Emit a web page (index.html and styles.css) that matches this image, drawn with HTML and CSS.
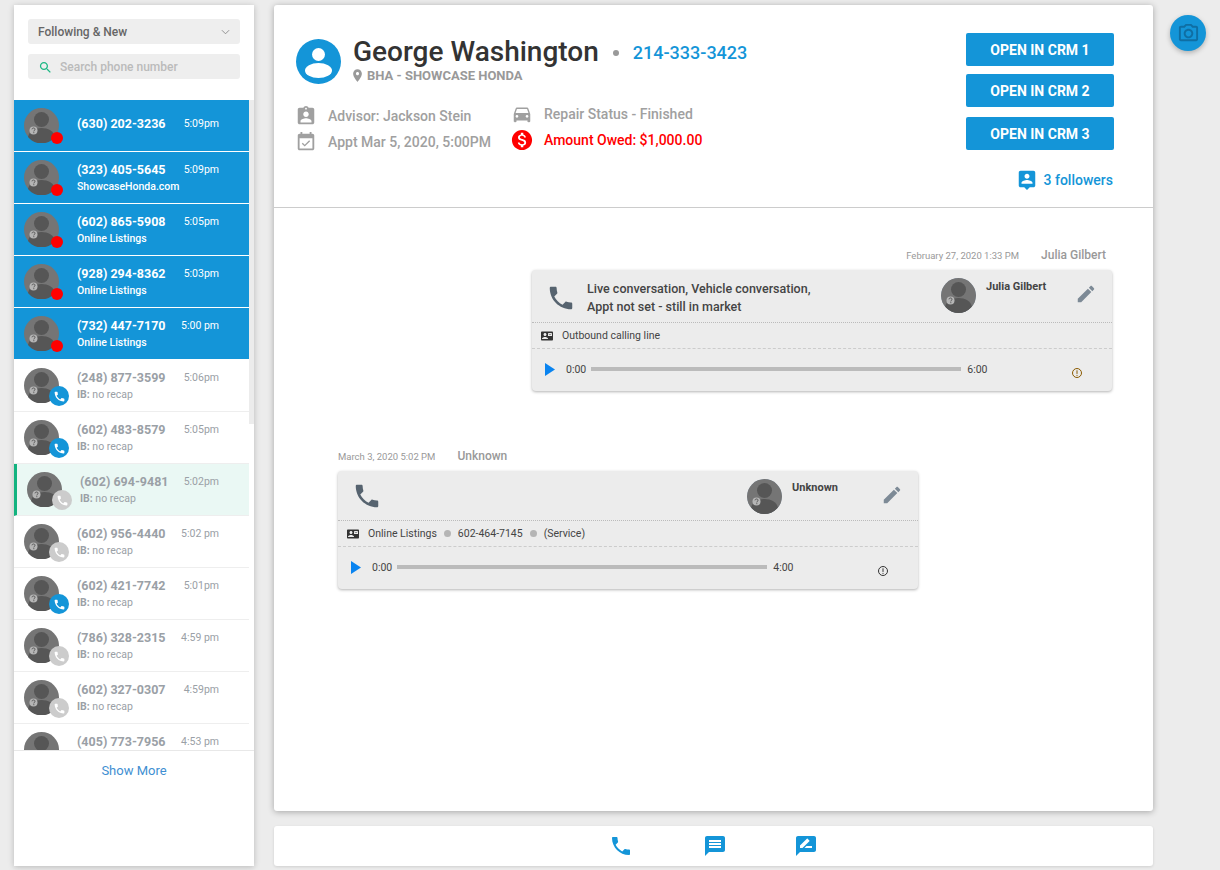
FILE: index.html
```html
<!DOCTYPE html>
<html>
<head>
<title>Calls</title>
<link rel="stylesheet" href="styles.css">
</head>
<body>
<svg class="defs" width="0" height="0">
  <symbol id="ava" viewBox="0 0 35 35">
    <circle class="ava-bg" cx="17.5" cy="17.5" r="17.5"/>
    <circle class="ava-fg" cx="17.5" cy="11.5" r="7.5"/>
    <path class="ava-fg" d="M4 29c1-6 7-9 13.500-9s12.500 3 13.500 9a17.500 17.500 0 0 1-27 0z"/>
    <circle class="ava-q" cx="9.500" cy="22.500" r="4"/>
    <path class="ava-qm" d="M8 21.300c.2-1 .8-1.300 1.500-1.300.9 0 1.500.5 1.500 1.300 0 1.100-1.200 1-1.200 2.100M9.800 24.200v1"/>
  </symbol>
  <symbol id="i-phone" viewBox="0 0 24 24"><path d="M6.620 10.790c1.440 2.830 3.760 5.140 6.590 6.590l2.200-2.200c.27-.27.67-.36 1.020-.24 1.120.37 2.330.57 3.570.57.55 0 1 .45 1 1V20c0 .55-.45 1-1 1-9.390 0-17-7.610-17-17 0-.55.45-1 1-1h3.500c.55 0 1 .45 1 1 0 1.250.2 2.450.57 3.570.11.35.03.74-.25 1.020l-2.200 2.200z"/></symbol>
  <symbol id="i-edit" viewBox="0 0 24 24"><path d="M3 17.250V21h3.750L17.810 9.940l-3.750-3.750L3 17.250zM20.710 7.040c.39-.39.39-1.020 0-1.410l-2.340-2.340c-.39-.39-1.020-.39-1.410 0l-1.830 1.830 3.750 3.750 1.830-1.830z"/></symbol>
  <symbol id="i-line" viewBox="0 0 24 24"><path d="M21 8V7l-3 2-3-2v1l3 2 3-2zm1-5H2C.9 3 0 3.900 0 5v14c0 1.100.9 2 2 2h20c1.100 0 1.990-.9 1.990-2L24 5c0-1.100-.9-2-2-2zM8 6c1.660 0 3 1.340 3 3s-1.340 3-3 3-3-1.340-3-3 1.340-3 3-3zm6 12H2v-1c0-2 4-3.100 6-3.100s6 1.100 6 3.100v1zm8-6h-8V6h8v6z"/></symbol>
  <symbol id="i-info" viewBox="0 0 12 12"><circle cx="6" cy="6" r="4.500" fill="none" stroke="currentColor"/><path d="M6 3.300v3.600M6 7.900v1" stroke="currentColor" fill="none"/></symbol>
</svg>

<div class="app">
  <aside class="sidebar">
    <div class="filters">
      <div class="filter-select">
        <span>Following &amp; New</span>
        <svg class="chevron" viewBox="0 0 10 6"><polyline points="1,1 5,5 9,1"/></svg>
      </div>
      <div class="filter-search">
        <svg class="search-ico" viewBox="0 0 24 24"><path d="M15.500 14h-.79l-.28-.27C15.410 12.590 16 11.110 16 9.500 16 5.910 13.090 3 9.500 3S3 5.910 3 9.500 5.910 16 9.500 16c1.610 0 3.090-.59 4.230-1.570l.27.28v.79l5 4.990L20.490 19l-4.990-5zm-6 0C7.010 14 5 11.990 5 9.500S7.010 5 9.500 5 14 7.010 14 9.500 11.990 14 9.500 14z"/></svg>
        <span>Search phone number</span>
      </div>
    </div>

    <div class="list-wrap">
      <ul class="list">
        <li class="item hot single">
          <div class="pic"><svg class="ava"><use href="#ava"/></svg><i class="dot-red"></i></div>
          <div class="txt"><div class="row"><b>(630) 202-3236</b><time>5:09pm</time></div></div>
        </li>
        <li class="item hot">
          <div class="pic"><svg class="ava"><use href="#ava"/></svg><i class="dot-red"></i></div>
          <div class="txt"><div class="row"><b>(323) 405-5645</b><time>5:09pm</time></div><p>ShowcaseHonda.com</p></div>
        </li>
        <li class="item hot">
          <div class="pic"><svg class="ava"><use href="#ava"/></svg><i class="dot-red"></i></div>
          <div class="txt"><div class="row"><b>(602) 865-5908</b><time>5:05pm</time></div><p>Online Listings</p></div>
        </li>
        <li class="item hot">
          <div class="pic"><svg class="ava"><use href="#ava"/></svg><i class="dot-red"></i></div>
          <div class="txt"><div class="row"><b>(928) 294-8362</b><time>5:03pm</time></div><p>Online Listings</p></div>
        </li>
        <li class="item hot">
          <div class="pic"><svg class="ava"><use href="#ava"/></svg><i class="dot-red"></i></div>
          <div class="txt"><div class="row"><b>(732) 447-7170</b><time>5:00 pm</time></div><p>Online Listings</p></div>
        </li>
        <li class="item">
          <div class="pic"><svg class="ava"><use href="#ava"/></svg><i class="badge on"><svg><use href="#i-phone"/></svg></i></div>
          <div class="txt"><div class="row"><b>(248) 877-3599</b><time>5:06pm</time></div><p><strong>IB:</strong> no recap</p></div>
        </li>
        <li class="item">
          <div class="pic"><svg class="ava"><use href="#ava"/></svg><i class="badge on"><svg><use href="#i-phone"/></svg></i></div>
          <div class="txt"><div class="row"><b>(602) 483-8579</b><time>5:05pm</time></div><p><strong>IB:</strong> no recap</p></div>
        </li>
        <li class="item selected">
          <div class="pic"><svg class="ava"><use href="#ava"/></svg><i class="badge"><svg><use href="#i-phone"/></svg></i></div>
          <div class="txt"><div class="row"><b>(602) 694-9481</b><time>5:02pm</time></div><p><strong>IB:</strong> no recap</p></div>
        </li>
        <li class="item">
          <div class="pic"><svg class="ava"><use href="#ava"/></svg><i class="badge"><svg><use href="#i-phone"/></svg></i></div>
          <div class="txt"><div class="row"><b>(602) 956-4440</b><time>5:02 pm</time></div><p><strong>IB:</strong> no recap</p></div>
        </li>
        <li class="item">
          <div class="pic"><svg class="ava"><use href="#ava"/></svg><i class="badge on"><svg><use href="#i-phone"/></svg></i></div>
          <div class="txt"><div class="row"><b>(602) 421-7742</b><time>5:01pm</time></div><p><strong>IB:</strong> no recap</p></div>
        </li>
        <li class="item">
          <div class="pic"><svg class="ava"><use href="#ava"/></svg><i class="badge"><svg><use href="#i-phone"/></svg></i></div>
          <div class="txt"><div class="row"><b>(786) 328-2315</b><time>4:59 pm</time></div><p><strong>IB:</strong> no recap</p></div>
        </li>
        <li class="item">
          <div class="pic"><svg class="ava"><use href="#ava"/></svg><i class="badge"><svg><use href="#i-phone"/></svg></i></div>
          <div class="txt"><div class="row"><b>(602) 327-0307</b><time>4:59pm</time></div><p><strong>IB:</strong> no recap</p></div>
        </li>
        <li class="item">
          <div class="pic"><svg class="ava"><use href="#ava"/></svg><i class="badge"><svg><use href="#i-phone"/></svg></i></div>
          <div class="txt"><div class="row"><b>(405) 773-7956</b><time>4:53 pm</time></div><p><strong>IB:</strong> no recap</p></div>
        </li>
      </ul>
      <div class="scroll"><div class="thumb"></div></div>
    </div>
    <a class="more">Show More</a>
  </aside>

  <main class="main">
    <section class="panel">
      <header class="head">
        <div class="head-left">
          <div class="who">
            <svg class="who-pic" viewBox="0 0 45 45">
              <circle cx="22.500" cy="22.500" r="22.500" fill="#1495d8"/>
              <circle cx="22.500" cy="15.500" r="6.500" fill="#fff"/>
              <ellipse cx="22.500" cy="31.500" rx="13.500" ry="7.500" fill="#fff"/>
            </svg>
            <div>
              <div class="who-top">
                <h1>George Washington</h1>
                <i class="who-dot"></i>
                <a class="who-phone">214-333-3423</a>
              </div>
              <div class="who-loc">
                <svg viewBox="0 0 24 24"><path d="M12 2C8.130 2 5 5.130 5 9c0 5.250 7 13 7 13s7-7.750 7-13c0-3.870-3.130-7-7-7zm0 9.500c-1.380 0-2.500-1.120-2.500-2.500s1.120-2.500 2.500-2.500 2.500 1.120 2.500 2.500-1.120 2.500-2.500 2.500z"/></svg>
                <span>BHA - SHOWCASE HONDA</span>
              </div>
            </div>
          </div>
          <div class="facts">
            <div class="facts-col">
              <div class="fact">
                <svg viewBox="0 0 24 24"><path d="M19 3h-4.180C14.400 1.840 13.300 1 12 1c-1.300 0-2.400.84-2.820 2H5c-1.100 0-2 .9-2 2v14c0 1.100.9 2 2 2h14c1.100 0 2-.9 2-2V5c0-1.100-.9-2-2-2zm-7 0c.55 0 1 .45 1 1s-.45 1-1 1-1-.45-1-1 .45-1 1-1zm0 4c1.660 0 3 1.340 3 3s-1.340 3-3 3-3-1.340-3-3 1.340-3 3-3zm6 12H6v-1.400c0-2 4-3.100 6-3.100s6 1.100 6 3.100V19z"/></svg>
                <span>Advisor: Jackson Stein</span>
              </div>
              <div class="fact">
                <svg viewBox="0 0 24 24"><path d="M16.530 11.060L15.470 10l-4.880 4.880-2.120-2.120-1.060 1.060L10.590 17l5.940-5.940zM19 3h-1V1h-2v2H8V1H6v2H5c-1.110 0-1.990.9-1.990 2L3 19c0 1.100.89 2 2 2h14c1.100 0 2-.9 2-2V5c0-1.100-.9-2-2-2zm0 16H5V8h14v11z"/></svg>
                <span>Appt Mar 5, 2020, 5:00PM</span>
              </div>
            </div>
            <div class="facts-col second">
              <div class="fact">
                <svg viewBox="0 0 24 24"><path d="M18.920 6.010C18.720 5.420 18.160 5 17.500 5h-11c-.66 0-1.210.42-1.420 1.010L3 12v8c0 .55.45 1 1 1h1c.55 0 1-.45 1-1v-1h12v1c0 .55.45 1 1 1h1c.55 0 1-.45 1-1v-8l-2.080-5.990zM6.500 16c-.83 0-1.500-.67-1.500-1.500S5.670 13 6.500 13s1.500.67 1.500 1.500S7.330 16 6.500 16zm11 0c-.83 0-1.500-.67-1.500-1.500s.67-1.500 1.500-1.500 1.500.67 1.500 1.500-.67 1.500-1.500 1.500zM5 11l1.500-4.500h11L19 11H5z"/></svg>
                <span>Repair Status - Finished</span>
              </div>
              <div class="fact owed">
                <svg viewBox="0 0 24 24"><path d="M12 1C5.930 1 1 5.930 1 12s4.930 11 11 11 11-4.930 11-11S18.070 1 12 1zm1.410 17.090V20h-2.670v-1.930c-1.710-.36-3.160-1.460-3.270-3.400h1.960c.1 1.050.82 1.870 2.650 1.870 1.960 0 2.400-.98 2.400-1.590 0-.83-.44-1.610-2.670-2.140-2.480-.6-4.180-1.620-4.180-3.670 0-1.720 1.390-2.840 3.110-3.210V4h2.670v1.950c1.860.45 2.790 1.860 2.850 3.390H14.300c-.05-1.110-.64-1.870-2.220-1.870-1.500 0-2.400.68-2.400 1.640 0 .84.65 1.390 2.670 1.910s4.180 1.390 4.180 3.910c-.01 1.830-1.380 2.830-3.120 3.160z"/></svg>
                <span>Amount Owed: $1,000.00</span>
              </div>
            </div>
          </div>
        </div>
        <div class="head-right">
          <button class="crm">OPEN IN CRM 1</button>
          <button class="crm">OPEN IN CRM 2</button>
          <button class="crm third">OPEN IN CRM 3</button>
          <a class="followers">
            <svg viewBox="0 0 24 24"><path d="M19 2H5c-1.110 0-2 .9-2 2v14c0 1.100.89 2 2 2h4l3 3 3-3h4c1.100 0 2-.9 2-2V4c0-1.100-.9-2-2-2zm-7 3.300c1.490 0 2.700 1.210 2.700 2.700 0 1.490-1.210 2.700-2.700 2.700-1.490 0-2.700-1.210-2.700-2.700 0-1.490 1.210-2.700 2.700-2.700zM18 16H6v-.9c0-2 4-3.100 6-3.100s6 1.100 6 3.100v.9z"/></svg>
            <span>3 followers</span>
          </a>
        </div>
      </header>

      <div class="feed">
        <article class="msg out">
          <div class="msg-meta"><time>February 27, 2020 1:33 PM</time><span>Julia Gilbert</span></div>
          <div class="card">
            <div class="card-top">
              <svg class="card-phone"><use href="#i-phone"/></svg>
              <div class="card-title">Live conversation, Vehicle conversation,<br>Appt not set - still in market</div>
              <div class="rep">
                <svg class="rep-pic blue"><use href="#ava"/></svg>
                <span>Julia Gilbert</span>
              </div>
              <svg class="card-edit"><use href="#i-edit"/></svg>
            </div>
            <div class="card-line">
              <svg><use href="#i-line"/></svg>
              <span>Outbound calling line</span>
            </div>
            <div class="player">
              <svg class="play" viewBox="0 0 10 13"><path d="M0 0l10 6.500L0 13z"/></svg>
              <span>0:00</span>
              <i class="track"></i>
              <span>6:00</span>
              <svg class="info warm"><use href="#i-info"/></svg>
            </div>
          </div>
        </article>

        <article class="msg in">
          <div class="msg-meta"><time>March 3, 2020 5:02 PM</time><span>Unknown</span></div>
          <div class="card">
            <div class="card-top short">
              <svg class="card-phone"><use href="#i-phone"/></svg>
              <div class="card-title"></div>
              <div class="rep">
                <svg class="rep-pic"><use href="#ava"/></svg>
                <span>Unknown</span>
              </div>
              <svg class="card-edit"><use href="#i-edit"/></svg>
            </div>
            <div class="card-line">
              <svg><use href="#i-line"/></svg>
              <span>Online Listings</span><i class="sep"></i>
              <span>602-464-7145</span><i class="sep"></i>
              <span>(Service)</span>
            </div>
            <div class="player">
              <svg class="play" viewBox="0 0 10 13"><path d="M0 0l10 6.500L0 13z"/></svg>
              <span>0:00</span>
              <i class="track"></i>
              <span>4:00</span>
              <svg class="info"><use href="#i-info"/></svg>
            </div>
          </div>
        </article>
      </div>
    </section>

    <nav class="actions">
      <svg><use href="#i-phone"/></svg>
      <svg class="act-msg" viewBox="0 0 24 24"><path d="M20 2H4c-1.100 0-1.990.9-1.990 2L2 22l4-4h14c1.100 0 2-.9 2-2V4c0-1.100-.9-2-2-2zm-2 12H6v-2h12v2zm0-3H6V9h12v2zm0-3H6V6h12v2z"/></svg>
      <svg viewBox="0 0 24 24"><path d="M20 2H4c-1.100 0-2 .9-2 2v18l4-4h14c1.100 0 2-.9 2-2V4c0-1.100-.9-2-2-2zM6 14v-2.470l6.880-6.880c.2-.2.51-.2.71 0l1.770 1.770c.2.2.2.51 0 .71L8.470 14H6zm12 0h-7.500l2-2H18v2z"/></svg>
    </nav>
  </main>

  <div class="rail">
    <button class="cam">
      <svg viewBox="0 0 24 24"><path d="M20 4h-3.170L15 2H9L7.170 4H4c-1.100 0-2 .9-2 2v12c0 1.100.9 2 2 2h16c1.100 0 2-.9 2-2V6c0-1.100-.9-2-2-2zm0 14H4V6h4.050l1.830-2h4.240l1.830 2H20v12zM12 7c-2.760 0-5 2.240-5 5s2.240 5 5 5 5-2.240 5-5-2.240-5-5-5zm0 8c-1.650 0-3-1.350-3-3s1.350-3 3-3 3 1.350 3 3-1.350 3-3 3z"/></svg>
    </button>
  </div>
</div>
</body>
</html>
```

FILE: styles.css
```css
html, body { margin:0; height:100%; overflow:hidden; }
body { background:#ececec; font-family:Roboto, "Liberation Sans", sans-serif; color:#444; }
.defs { display:block; height:0; }
svg { display:block; fill:currentColor; }
ul, p, h1 { margin:0; padding:0; list-style:none; }
i { display:block; font-style:normal; }
button { font-family:inherit; border:0; padding:0; }

.app { display:flex; height:870px; box-sizing:border-box; padding:5px 0 4px 14px; }

/* left list */
.sidebar { width:240px; flex:none; background:#fff; display:flex; flex-direction:column;
           box-shadow:0 1px 6px rgba(0,0,0,.22); }
.filters { padding:14px 14px 21px; display:flex; flex-direction:column; gap:10px; }
.filter-select, .filter-search { height:25px; background:#eee; border-radius:3px; display:flex;
           align-items:center; font-size:12px; font-weight:500; padding:0 10px; }
.filter-select { color:#666; justify-content:space-between; }
.chevron { width:9px; height:6px; fill:none; stroke:#888; stroke-width:1; }
.filter-search { color:#bbb; gap:7px; }
.search-ico { width:15px; height:15px; color:#1db884; flex:none; margin-top:1px; }

.list-wrap { height:650px; display:flex; overflow:hidden; border-bottom:1px solid #e8e8e8; }
.list { width:235px; flex:none; }
.scroll { flex:1; }
.thumb { height:324px; background:#ececec; }

.item { height:52px; box-sizing:border-box; display:flex; padding:8px 0 0 10px;
        border-bottom:1px solid #eee; color:#9aa0a6; }
.item.hot { background:#1495d8; color:#fff; border-bottom-color:#fff; }
.item.selected { background:#eaf8f4; border-left:3px solid #12b37f; }
.pic { width:35px; height:35px; position:relative; flex:none; }
.ava { width:35px; height:35px; }
.ava-bg { fill:#757575; }
.ava-fg { fill:#565656; }
.ava-q { fill:#b5b5b5; }
.ava-qm { fill:none; stroke:#555; stroke-width:1; }
.dot-red { position:absolute; right:-4px; bottom:-1px; width:12px; height:12px; border-radius:50%; background:#f00; }
.badge { position:absolute; right:-10px; bottom:-3px; width:20px; height:20px; border-radius:50%;
         background:#ccc; color:#fff; display:flex; align-items:center; justify-content:center; }
.badge.on { background:#1495d8; }
.badge svg { width:13px; height:13px; }
.txt { margin-left:18px; width:142px; padding-top:1px; }
.row { display:flex; justify-content:space-between; align-items:center; height:17px; }
.row b { font-size:12.5px; font-weight:700; }
.row time { font-size:10.500px; }
.txt p { font-size:10.500px; line-height:17px; }
.txt p strong { font-weight:700; }
.item.hot .txt p { font-weight:500; }
.item.single .txt { padding-top:7px; }
.item.selected .txt { width:139px; }
.more { display:block; text-align:center; font-size:13px; color:#3f8fd2; margin-top:12px; }

/* middle */
.main { width:879px; flex:none; margin-left:20px; display:flex; flex-direction:column; gap:15px; }
.panel { flex:1; background:#fff; border-radius:3px; box-shadow:0 1px 6px rgba(0,0,0,.3); }
.actions { height:40px; flex:none; background:#fff; border-radius:3px; box-shadow:0 1px 3px rgba(0,0,0,.12);
           display:flex; align-items:center; justify-content:center; gap:67px; color:#1495d8; }
.actions svg { width:24px; height:24px; }
.act-msg { margin-left:3px; }

.head { height:203px; box-sizing:border-box; border-bottom:1px solid #ccc; display:flex;
        justify-content:space-between; padding:28px 39px 0 22px; }
.who { display:flex; gap:12px; align-items:flex-start; }
.who-pic { width:45px; height:45px; margin-top:6px; flex:none; }
.who-top { display:flex; align-items:center; height:36px; }
.who-top h1 { font-size:28px; font-weight:500; color:#333; }
.who-dot { width:6px; height:6px; border-radius:50%; background:#999; margin:3px 14px 0 14px; }
.who-phone { font-size:18px; font-weight:500; color:#1495d8; margin-top:2px; }
.who-loc { display:flex; align-items:center; gap:2px; font-size:13px; font-weight:700; color:#999; margin-top:-1px; }
.who-loc svg { width:15px; height:15px; margin-left:-3px; }
.facts { display:flex; margin-top:19px; color:#a0a0a0; }
.facts-col { width:218px; display:flex; flex-direction:column; gap:4px; padding-top:2px; }
.facts-col.second { padding-top:0; margin-left:-2px; }
.fact { display:flex; align-items:center; height:22px; font-size:14px; font-weight:500; }
.fact svg { width:22px; height:22px; margin-left:-1px; margin-right:11px; flex:none; }
.facts-col.second .fact svg { margin-right:11px; }
.fact.owed { color:#f00; }

.head-right { width:148px; display:flex; flex-direction:column; }
.crm { height:33px; background:#1495d8; color:#fff; border-radius:2px; font-size:14px; font-weight:700; margin-bottom:8px; }
.crm.third { margin-top:2px; margin-bottom:0; }
.followers { display:flex; justify-content:flex-end; align-items:center; gap:6px; color:#1495d8;
             font-size:14px; font-weight:500; margin-top:19px; padding-right:1px; }
.followers svg { width:22px; height:22px; }

/* feed */
.feed { display:flex; flex-direction:column; padding-top:39px; }
.msg { width:580px; }
.msg.out { align-self:flex-end; margin-right:41px; }
.msg.in { margin-left:64px; margin-top:57px; }
.msg-meta { display:flex; align-items:center; height:16px; margin-bottom:7px; font-size:12px; font-weight:500; color:#999; }
.msg-meta time { font-size:9.500px; font-weight:400; }
.msg-meta span { margin-left:22px; }
.msg.out .msg-meta { justify-content:flex-end; padding-right:6px; }
.card { background:#ececec; border-radius:4px; box-shadow:0 1px 3px rgba(0,0,0,.3); }
.card-top { height:52px; display:flex; position:relative; border-bottom:1px dotted #bbb; }
.card-top.short { height:49px; }
.card-phone { width:30px; height:30px; margin:13px 0 0 14px; color:#56636f; flex:none; }
.card-top.short .card-phone { margin-top:10px; }
.card-title { width:354px; margin:10px 0 0 11px; font-size:12.500px; font-weight:500; line-height:18px; color:#444; }
.rep { display:flex; width:134px; padding-top:8px; font-size:11px; font-weight:700; color:#444; }
.rep span { margin-left:10px; line-height:17px; }
.rep-pic { width:35px; height:35px; border-radius:50%; box-shadow:inset 0 0 0 2px #8a97a5; flex:none; }
.rep-pic.blue { --blue:1; }
.card-edit { width:22px; height:22px; color:#7d8a96; margin-top:13px; flex:none; }
.card-top.short .card-edit { margin-top:13px; }
.card-line { height:25px; display:flex; align-items:center; border-bottom:1px dashed #ccc; padding-left:9px;
             font-size:10.500px; color:#444; }
.card-line svg { width:12px; height:12px; margin-right:9px; color:#333; }
.sep { width:7px; height:7px; border-radius:50%; background:#b5b5b5; margin:0 7px; }
.player { height:40px; display:flex; align-items:center; padding:0 0 2px 13px; font-size:10.500px; color:#444; position:relative; }
.play { width:10px; height:13px; fill:#0a84f0; margin-right:11px; }
.track { width:370px; height:4px; background:#bbb; margin:0 6px 0 5px; }
.info { position:absolute; left:539px; top:18px; width:12px; height:12px; color:#333; }
.info.warm { color:#8a5a00; }

.rail { margin-left:17px; padding-top:10px; }
.cam { width:36px; height:36px; border-radius:50%; background:#1495d8; color:#0f6ea3; display:flex;
       align-items:center; justify-content:center; box-shadow:0 2px 5px rgba(0,0,0,.25); }
.cam svg { width:23px; height:23px; }
```
